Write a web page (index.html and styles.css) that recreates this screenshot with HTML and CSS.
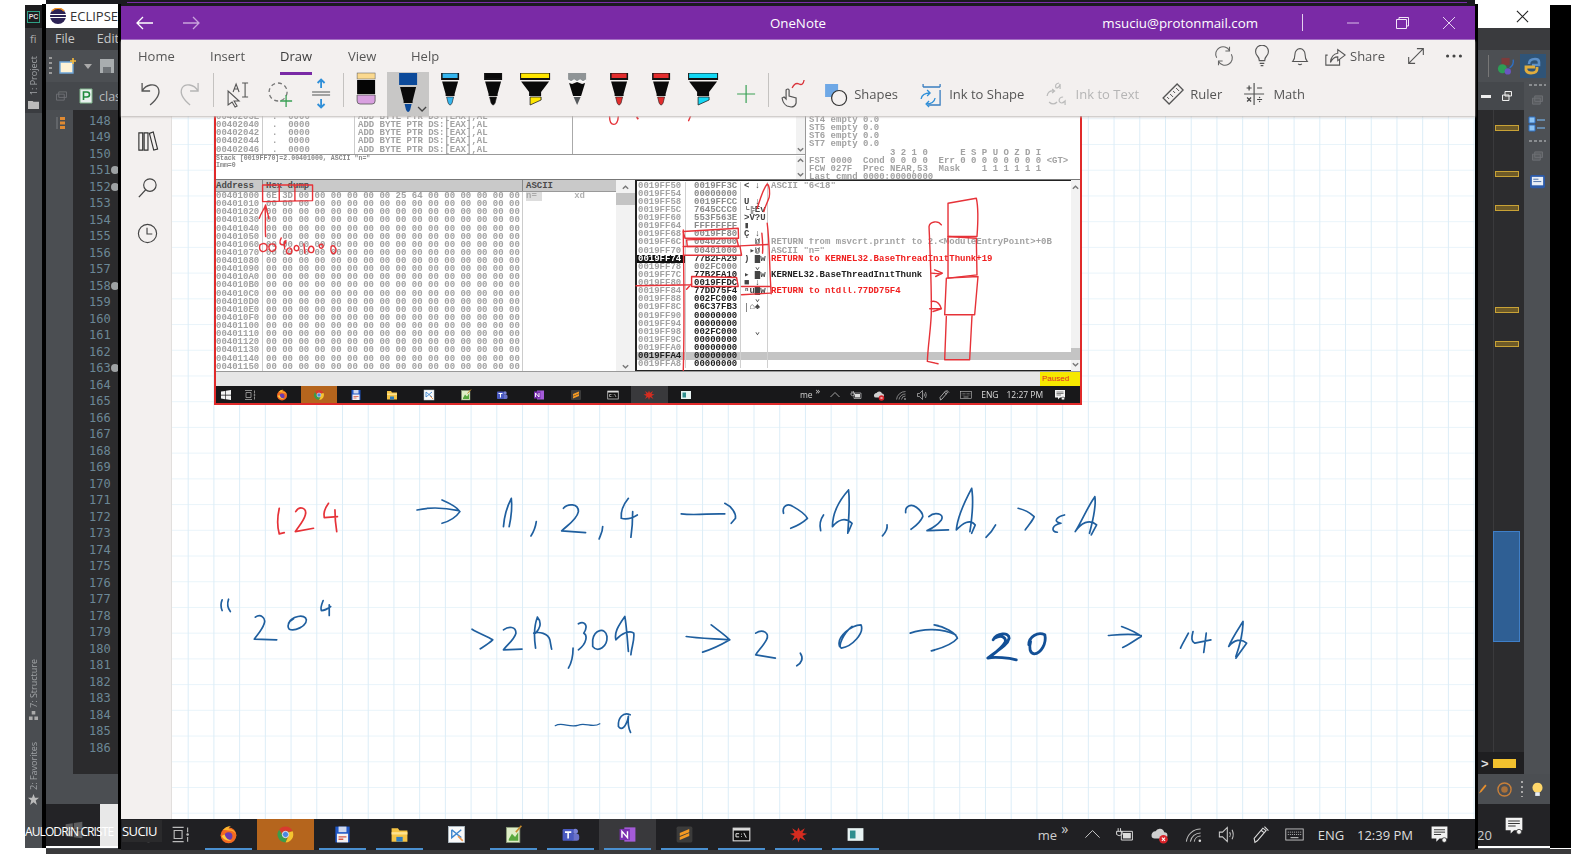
FILE: index.html
```html
<!DOCTYPE html>
<html lang="en">
<head>
  <meta charset="UTF-8" />
  <title>OneNote</title>
  <link rel="stylesheet" href="styles.css">
</head>
<body>
  <svg class="defs" aria-hidden="true">
    <symbol id="pen" viewBox="0 0 42 44">
      <rect x="12" y="1" width="18" height="7" fill="#111"/><rect x="13.5" y="1.5" width="15" height="4.5" fill="currentColor"/>
      <path d="M13 9.5H29L25.5 22V24H16.5V22Z" fill="#0a0a0a"/>
      <path d="M17.5 25H24.5L23 31Q21 35 19 31Z" fill="currentColor" stroke="#222" stroke-width=".6"/>
    </symbol>
    <symbol id="pen-sel" viewBox="0 0 42 44">
      <rect x="12" y="1" width="18" height="12" fill="#0c4a9a"/>
      <path d="M13 15H29L25.5 29V31H16.5V29Z" fill="#0a0a0a"/>
      <path d="M17.5 32H24.5L23 38Q21 42 19 38Z" fill="#0c4a9a"/>
      <path d="M31 35L35 39L39 35" fill="none" stroke="#444" stroke-width="1.3"/>
    </symbol>
    <symbol id="marker" viewBox="0 0 42 44">
      <rect x="6" y="1" width="30" height="7" fill="#111"/><rect x="7" y="1.5" width="28" height="4.5" fill="currentColor"/>
      <path d="M7 9.5H35L27 20V24H15V20Z" fill="#0a0a0a"/>
      <path d="M16 25H27V28L16 33Z" fill="currentColor" stroke="#222" stroke-width=".8"/>
    </symbol>
    <symbol id="pencil" viewBox="0 0 42 44">
      <rect x="12" y="1" width="18" height="8" fill="#8f9496"/>
      <path d="M12 8L15 10L18 8L21 10L24 8L27 10L30 8" fill="none" stroke="#fff" stroke-width="1.2"/>
      <path d="M13 11L16 12L21 10L26 12L29 11L25 24H17Z" fill="#0a0a0a"/>
      <path d="M17.5 25H24.5L21 33Z" fill="#55595c"/>
    </symbol>
    <symbol id="eraser" viewBox="0 0 42 44">
      <rect x="12" y="1" width="18" height="6" fill="#fbd98f" stroke="#555" stroke-width=".5"/>
      <rect x="12" y="8" width="18" height="14" fill="#050505"/>
      <path d="M12 23H30V29Q30 32 27 32H15Q12 32 12 29Z" fill="#d9a0e0" stroke="#555" stroke-width=".8"/>
    </symbol>

    <symbol id="win" viewBox="0 0 24 24"><path d="M2 5L10.5 3.8V11.5H2ZM11.8 3.6L22 2V11.5H11.8ZM2 12.8H10.5V20.4L2 19.2ZM11.8 12.8H22V22L11.8 20.6Z" fill="currentColor"/></symbol>
    <symbol id="taskview" viewBox="0 0 24 24"><path d="M2 3H16M2 21H16M4 7H14V17H4ZM21 3V9M21 15V21" fill="none" stroke="#bbb" stroke-width="1.4"/><circle cx="21" cy="12" r="1.6" fill="#bbb"/></symbol>
    <symbol id="firefox" viewBox="0 0 24 24"><circle cx="12" cy="13" r="10" fill="#f26a21"/><path d="M5 6Q10 0 15 2Q12 3 12 5Q20 5 22 13Q20 7 12 7Z" fill="#ffb52e"/><circle cx="12" cy="14" r="5" fill="#6a3cb0"/><path d="M3 14Q8 22 17 19Q10 20 7 12Z" fill="#ffcb3d"/></symbol>
    <symbol id="chrome" viewBox="0 0 24 24"><path d="M12 2A10 10 0 0 1 21 8H12A4 4 0 0 0 8 10L4 6A10 10 0 0 1 12 2Z" fill="#d93a2e"/><path d="M21 8A10 10 0 0 1 12 22L16 14A4 4 0 0 0 15.5 9.5Z" fill="#f4c430"/><path d="M4 6L8.5 14A4 4 0 0 0 14 16L12 22A10 10 0 0 1 4 6Z" fill="#3b9c4a"/><circle cx="12" cy="12" r="4" fill="#4a87e0" stroke="#fff"/></symbol>
    <symbol id="save" viewBox="0 0 24 24"><path d="M3 2H21V22H3Z" fill="#1f57c7"/><rect x="7" y="2" width="10" height="7" fill="#cfd8ee"/><rect x="5" y="11" width="14" height="11" fill="#f4f0f0"/><path d="M7 15H17M7 18H13" stroke="#d0584c" stroke-width="1.6"/></symbol>
    <symbol id="folder" viewBox="0 0 24 24"><path d="M2 4H10L12 7H22V21H2Z" fill="#f5c445"/><rect x="2" y="9" width="20" height="3" fill="#ffe38f"/><rect x="8" y="15" width="8" height="6" fill="#2f7dc0"/></symbol>
    <symbol id="paint" viewBox="0 0 24 24"><rect x="2" y="2" width="20" height="20" fill="#fafafa" stroke="#b9c6cf"/><path d="M6 6L12 11L6 16V6M18 6L12 11L18 16" fill="none" stroke="#3d86cf" stroke-width="1.8"/><path d="M14 14L20 20" stroke="#ef9a50" stroke-width="2"/></symbol>
    <symbol id="notepad" viewBox="0 0 24 24"><rect x="3" y="3" width="17" height="19" fill="#dfeec7" stroke="#8a9a78"/><path d="M6 18L10 11L14 15L18 9V20H6Z" fill="#58a83e"/><path d="M15 9L22 1" stroke="#c58b2d" stroke-width="2"/></symbol>
    <symbol id="teams" viewBox="0 0 24 24"><circle cx="18" cy="8" r="3.4" fill="#7b83d6"/><rect x="13" y="11" width="10" height="9" rx="3" fill="#6a72c9"/><rect x="2" y="5" width="14" height="15" rx="1.5" fill="#4a5ac0"/><path d="M5 9H13M9 9V17" stroke="#fff" stroke-width="2"/></symbol>
    <symbol id="onenote" viewBox="0 0 24 24"><rect x="8" y="3" width="14" height="18" fill="#a45bd8"/><rect x="2" y="5" width="13" height="14" fill="#7a2fb0"/><path d="M5 16V8L12 16V8" fill="none" stroke="#fff" stroke-width="1.8"/></symbol>
    <symbol id="sublime" viewBox="0 0 24 24"><rect x="2" y="2" width="20" height="20" rx="2" fill="#3b3b3b"/><path d="M6 10L18 5V9L6 14ZM6 15L18 10V14L6 19Z" fill="#f59a23"/></symbol>
    <symbol id="cmd" viewBox="0 0 24 24"><rect x="1.5" y="4" width="21" height="16" fill="#111" stroke="#ddd" stroke-width="1.4"/><rect x="1.5" y="4" width="21" height="3" fill="#ddd"/><path d="M5 11H9M5 11V15H9M12 11V12M12 14V15M15 10L18 16" fill="none" stroke="#eee" stroke-width="1.2"/></symbol>
    <symbol id="bug" viewBox="0 0 24 24"><path d="M12 3L14 8L20 4L17 10L23 11L17 14L21 20L14 16L12 22L10 16L4 20L7 14L1 11L7 10L4 4L10 8Z" fill="#d62c20"/></symbol>
    <symbol id="app" viewBox="0 0 24 24"><rect x="2" y="4" width="20" height="16" fill="#e8f3f3"/><rect x="5" y="7" width="7" height="10" fill="#2f8f8f"/></symbol>
    <symbol id="batt" viewBox="0 0 24 24"><path d="M8 8H22V19H8ZM4 4V8M7 4V8M2 8H9V12Q5 15 2 12Z" fill="none" stroke="#ddd" stroke-width="1.2"/><rect x="10" y="10" width="10" height="7" fill="#ddd"/></symbol>
    <symbol id="cloud" viewBox="0 0 24 24"><path d="M2 14A5 5 0 0 1 7 8A6 6 0 0 1 18 9A4 4 0 0 1 18 17H6Q2 17 2 14Z" fill="#cfcfcf"/><circle cx="17" cy="18" r="5.5" fill="#d8232a"/><path d="M15 16L19 20M19 16L15 20" stroke="#fff" stroke-width="1.3"/></symbol>
    <symbol id="wifi" viewBox="0 0 24 24"><path d="M3 21A18 18 0 0 1 21 5M8 21A13 13 0 0 1 21 10M13 21A8 8 0 0 1 21 14" fill="none" stroke="#bbb" stroke-width="1.3"/><circle cx="20" cy="20" r="1.6" fill="#ddd"/></symbol>
    <symbol id="vol" viewBox="0 0 24 24"><path d="M3 9H7L13 3V21L7 15H3ZM16 9Q18 12 16 15M19 6Q22 12 19 18" fill="none" stroke="#ccc" stroke-width="1.3"/></symbol>
    <symbol id="penico" viewBox="0 0 24 24"><path d="M5 22L4 17L15 4L19 7L8 20ZM13 7L17 10M17 2L22 7" fill="none" stroke="#ddd" stroke-width="1.4"/></symbol>
    <symbol id="kbd" viewBox="0 0 24 24"><rect x="1" y="5" width="22" height="14" fill="none" stroke="#ccc" stroke-width="1.1"/><path d="M3.5 9H20.5M3.5 12H20.5" stroke="#ccc" stroke-dasharray="1.4 1.2"/><path d="M7 16H17" stroke="#ccc" stroke-width="1.3"/></symbol>
    <symbol id="notif" viewBox="0 0 24 24"><path d="M2 2H22V17H12L8 21V17H2Z" fill="#f2f2f2"/><path d="M5 6H19M5 9H19M5 12H14" stroke="#333" stroke-width="1.2"/><circle cx="18" cy="19" r="3" fill="#f2f2f2" stroke="#333"/></symbol>

    <symbol id="chev" viewBox="0 0 10 10"><path d="M2 3.5L5 6.5L8 3.5" fill="none" stroke="currentColor" stroke-width="1.5"/></symbol>
  </svg>

  <div class="pc-strip">
    <div class="pc-title"><span class="pc-logo">PC</span></div>
    <div class="pc-menu">fi</div>
    <div class="pc-side">
      <span class="vert vert-project">1: Project</span>
      <svg class="side-folder" viewBox="0 0 12 10"><path d="M0 1H5L6 2H12V10H0Z" fill="#bbb"/></svg>
      <span class="side-space"></span>
      <span class="vert vert-structure">7: Structure</span>
      <svg class="side-mini" viewBox="0 0 10 10"><path d="M3 0H7V4H3ZM0 6H4V10H0ZM6 6H10V10H6Z" fill="#aaa"/></svg>
      <span class="vert vert-favs">2: Favorites</span>
      <svg class="side-star" viewBox="0 0 12 12"><path d="M6 0L7.6 4.2H12L8.4 7L9.8 12L6 9L2.2 12L3.6 7L0 4.2H4.4Z" fill="#bbb"/></svg>
    </div>
  </div>

  <div class="black-left"></div>
  <div class="black-right"></div>
  <div class="top-band"><span class="top-line"></span></div>
  <div class="bottom-band"></div>

  <!-- eclipse window, only its two edges show past onenote -->
  <div class="ecl ecl-left">
    <div class="ecl-title">
      <svg class="ecl-logo" viewBox="0 0 16 16"><circle cx="8" cy="8" r="8" fill="#2c2255"/><path d="M0 6.5H16M0 9.5H16" stroke="#fff" stroke-width="1.2"/><path d="M2 3A8 8 0 0 1 14 3" fill="none" stroke="#f7941e" stroke-width="1.4"/></svg>
      <span>ECLIPSE</span>
    </div>
    <div class="ecl-menu"><span>File</span><span>Edit</span></div>
    <div class="ecl-tools">
      <span class="grip"></span>
      <svg class="new-file" viewBox="0 0 18 18"><path d="M1 5H14V16H1Z" fill="#fff3d6" stroke="#6ea5d8" stroke-width="1.4"/><path d="M14 1V7M11 4H17" stroke="#f5b93d" stroke-width="1.6"/></svg>
      <svg class="caret" viewBox="0 0 8 5"><path d="M0 0H8L4 5Z" fill="#aaa"/></svg>
      <svg class="save-gray" viewBox="0 0 16 16"><path d="M1 1H15V15H1Z" fill="#a9adaf"/><rect x="4" y="9" width="8" height="6" fill="#6f7377"/></svg>
    </div>
    <div class="ecl-tabs">
      <svg class="stack-ico" viewBox="0 0 12 10"><path d="M3 .5H11.5V6.5H3ZM.5 3H9V9.5H.5Z" fill="none" stroke="#6e7175"/></svg>
      <svg class="p-file" viewBox="0 0 14 16"><path d="M1 1H13V15H1Z" fill="#e8f0ee" stroke="#7fb58a"/><path d="M4.5 12V4H8Q10.5 4 10.5 6.5T8 9H4.5" fill="none" stroke="#1f8a3e" stroke-width="1.6"/></svg>
      <span class="tab-name">clas</span>
    </div>
    <div class="ecl-edit">
      <div class="gutter">
        <svg class="gutter-ico" viewBox="0 0 10 14"><path d="M1 1V13" stroke="#7a7d80"/><path d="M4 1H9V4H4ZM4 5.5H9V8.5H4ZM4 10H9V13H4Z" fill="#e08a32"/></svg>
      </div>
      <pre class="lines">148
149
150
151<i class="fold"></i>
152<i class="fold"></i>
153
154
155
156
157
158<i class="fold"></i>
159
160
161
162
163<i class="fold"></i>
164
165
166
167
168
169
170
171
172
173
174
175
176
177
178
179
180
181
182
183
184
185
186</pre>
    </div>
    <div class="ecl-status"></div>
    <div class="ecl-bar">
      <svg class="bar-win" viewBox="0 0 24 24"><use href="#win"/></svg>
      <span class="bar-white"></span>
    </div>
  </div>

  <div class="ecl ecl-right">
    <div class="ecl-title ecl-title-r">
      <svg class="close-r" viewBox="0 0 14 14"><path d="M1 1L13 13M13 1L1 13" stroke="#222" stroke-width="1.2"/></svg>
    </div>
    <div class="ecl-menu"></div>
    <div class="ecl-tools ecl-tools-r">
      <span class="tool-sep"></span>
      <svg class="run-ico" viewBox="0 0 20 20"><rect x="5" y="1" width="9" height="8" fill="#7c3b3b"/><circle cx="6" cy="13" r="5" fill="#2e9c55"/><circle cx="12" cy="16" r="3.5" fill="#6a55c0"/><path d="M14 12Q19 9 18 3" fill="none" stroke="#2f6fc0" stroke-width="1.6"/></svg>
      <span class="py-btn"><svg viewBox="0 0 20 20"><path d="M6 8Q6 3 12 3Q16 3 16 6V9H9" fill="none" stroke="#5b8fc8" stroke-width="2.6"/><path d="M14 11V13Q14 17 8 17Q4 17 3 14V11H12" fill="none" stroke="#e0ad3e" stroke-width="2.8"/></svg></span>
    </div>
    <div class="ecl-body-r">
      <div class="ecl-column">
        <div class="ecl-tabs ecl-tabs-r">
          <span class="dash"></span>
          <svg class="restore-mini" viewBox="0 0 10 10"><path d="M3 .5H9.5V5H3ZM.5 4H7V9.5H.5Z" fill="#555" stroke="#eee"/></svg>
        </div>
        <div class="map">
          <span class="mark mark-1"></span>
          <span class="mark mark-2"></span>
          <span class="mark mark-3"></span>
          <span class="mark mark-4"></span>
          <span class="mark mark-5"></span>
          <span class="thumb"></span>
          <span class="map-foot"><span class="map-gt">&gt;</span><span class="map-yellow"></span></span>
        </div>
      </div>
      <div class="dock">
        <span class="dots"></span>
        <svg class="dock-ico" viewBox="0 0 12 10"><path d="M3 .5H11.5V6.5H3ZM.5 3H9V9.5H.5Z" fill="#5a5d60" stroke="#6e7175"/></svg>
        <svg class="dock-list" viewBox="0 0 18 18"><path d="M1 2H7V8H1ZM1 10H7V16H1Z" fill="#8ec5f5" stroke="#2f6fc0"/><path d="M9 5H17M9 13H17" stroke="#6d9cc8" stroke-width="1.4"/></svg>
        <span class="dots"></span>
        <svg class="dock-ico" viewBox="0 0 12 10"><path d="M3 .5H11.5V6.5H3ZM.5 3H9V9.5H.5Z" fill="#5a5d60" stroke="#6e7175"/></svg>
        <svg class="dock-mon" viewBox="0 0 16 16"><rect x="0" y="0" width="16" height="14" rx="2" fill="#2c5aa8"/><rect x="2" y="2" width="12" height="9" fill="#e8eef6"/><path d="M3.5 4.5H9M3.5 7H12" stroke="#4a6ea8"/></svg>
      </div>
    </div>
    <div class="ecl-status ecl-status-r">
      <svg class="st-pen" viewBox="0 0 10 12"><path d="M1 11L3 7L8 1L9.5 2.5L4 9Z" fill="#e8902e"/></svg>
      <svg class="st-coin" viewBox="0 0 16 16"><circle cx="8" cy="8" r="7" fill="none" stroke="#c9803a" stroke-width="1.5"/><circle cx="8" cy="8" r="3.5" fill="#a8703a"/></svg>
      <span class="st-dots"></span>
      <svg class="st-bulb" viewBox="0 0 12 16"><circle cx="6" cy="6" r="5.5" fill="#ffd76a"/><rect x="3.5" y="11" width="5" height="4" fill="#e8eef6"/></svg>
    </div>
    <div class="ecl-bar ecl-bar-r">
      <span class="bar-num">20</span>
      <svg class="bar-notif" viewBox="0 0 24 24"><use href="#notif"/></svg>
    </div>
  </div>

  <!-- onenote -->
  <div class="onenote">
    <div class="titlebar">
      <div class="nav">
        <svg viewBox="0 0 20 16"><path d="M18 8H2M8 2L2 8L8 14" fill="none" stroke="#fff" stroke-width="1.3"/></svg>
        <svg class="off" viewBox="0 0 20 16"><path d="M2 8H18M12 2L18 8L12 14" fill="none" stroke="#c9a4dc" stroke-width="1.3"/></svg>
      </div>
      <div class="app-name">OneNote</div>
      <div class="win-side">
        <span class="email">msuciu@protonmail.com</span>
        <span class="pipe"></span>
        <svg class="wbtn" viewBox="0 0 48 12"><path d="M18 6H30" stroke="#d9bde8"/></svg>
        <svg class="wbtn" viewBox="0 0 48 12"><path d="M19.5 2.5H29.5V11.5H19.5ZM22 2.5V.5H31.5V9H29.5" fill="none" stroke="#f2e6f8"/></svg>
        <svg class="wbtn" viewBox="0 0 48 12"><path d="M18 0L30 12M30 0L18 12" stroke="#e6d3f0"/></svg>
      </div>
    </div>

    <div class="ribbon">
      <div class="rib-top">
        <nav class="tabs">
          <span>Home</span><span>Insert</span><span class="active">Draw</span><span>View</span><span>Help</span>
        </nav>
        <div class="rib-actions">
          <svg class="act" viewBox="0 0 24 24"><path d="M4 14A8 8 0 0 1 18 6M20 10A8 8 0 0 1 6 18M18 2V6.5H13.5M6 22V17.5H10.5" fill="none" stroke="#666" stroke-width="1.2"/></svg>
          <svg class="act" viewBox="0 0 24 24"><path d="M9 17Q9 14 7 12A7 7 0 1 1 17 12Q15 14 15 17ZM9.5 20H14.5M10.5 22.5H13.5" fill="none" stroke="#555" stroke-width="1.2"/></svg>
          <svg class="act" viewBox="0 0 24 24"><path d="M4 18H20Q17.5 15 17.5 10A5.5 6 0 0 0 6.5 10Q6.5 15 4 18ZM10 20.5Q12 22.5 14 20.5" fill="none" stroke="#555" stroke-width="1.2"/></svg>
          <div class="share">
            <svg viewBox="0 0 24 24"><path d="M4 11H2V22H17V16M7 19Q8 10 15 9V5L23 11L15 17V13Q10 13 7 19Z" fill="none" stroke="#555" stroke-width="1.2"/></svg>
            <span>Share</span>
          </div>
          <svg class="act" viewBox="0 0 24 24"><path d="M4 20L20 4M13 4H20V11M4 13V20H11" fill="none" stroke="#555" stroke-width="1.2"/></svg>
          <svg class="act" viewBox="0 0 24 24"><circle cx="5" cy="12" r="1.7" fill="#444"/><circle cx="12" cy="12" r="1.7" fill="#444"/><circle cx="19" cy="12" r="1.7" fill="#444"/></svg>
        </div>
      </div>

      <div class="rib-tools">
        <svg class="tool" viewBox="0 0 42 44"><path d="M14 11V19H22M14 19C18 12 27 11 30 16C33 22 28 28 22 33" fill="none" stroke="#555" stroke-width="1.3"/></svg>
        <svg class="tool" viewBox="0 0 42 44"><path d="M28 11V19H20M28 19C24 12 15 11 12 16C9 22 14 28 20 33" fill="none" stroke="#b5b5b5" stroke-width="1.3"/></svg>
        <span class="rule"></span>
        <svg class="tool" viewBox="0 0 42 44"><path d="M13 19L13 33L17 30L20 35L22 34L19 29H24Z" fill="#f4f1f0" stroke="#555" stroke-width="1.1"/><path d="M18 20L21 12L24 20M19.5 17H22.5M27 11H33M30 11V25M27 25H33" fill="none" stroke="#555" stroke-width="1.1"/></svg>
        <svg class="tool" viewBox="0 0 42 44"><circle cx="20" cy="20" r="9" fill="none" stroke="#777" stroke-width="1.3" stroke-dasharray="4 3"/><path d="M28 23V35M22 29H34" stroke="#3aa055" stroke-width="1.3"/></svg>
        <svg class="tool" viewBox="0 0 42 44"><path d="M12 20H30M12 23H30" stroke="#888" stroke-width="1.5"/><path d="M21 16V8M17.5 11L21 7.5L24.5 11M21 27V35M17.5 32L21 35.5L24.5 32" fill="none" stroke="#2f8fd8" stroke-width="1.8"/></svg>
        <span class="rule"></span>
        <svg class="tool" viewBox="0 0 42 44"><use href="#eraser"/></svg>
        <span class="tool-sel"><svg viewBox="0 0 42 44"><use href="#pen-sel"/></svg></span>
        <svg class="tool c-cyan" viewBox="0 0 42 44"><use href="#pen"/></svg>
        <svg class="tool c-black" viewBox="0 0 42 44"><use href="#pen"/></svg>
        <svg class="tool c-yellow" viewBox="0 0 42 44"><use href="#marker"/></svg>
        <svg class="tool" viewBox="0 0 42 44"><use href="#pencil"/></svg>
        <svg class="tool c-red" viewBox="0 0 42 44"><use href="#pen"/></svg>
        <svg class="tool c-red" viewBox="0 0 42 44"><use href="#pen"/></svg>
        <svg class="tool c-aqua" viewBox="0 0 42 44"><use href="#marker"/></svg>
        <svg class="tool" viewBox="0 0 42 44"><path d="M21 13V31M12 22H30" stroke="#3aa055" stroke-width="1.2"/></svg>
        <span class="rule"></span>
        <svg class="tool" viewBox="0 0 42 44"><path d="M17 34Q13 32 12 26L14 25L16 27V18Q18 16 19 18V24L26 26V31Q25 35 21 35Z" fill="#f4f1f0" stroke="#555" stroke-width="1.2"/><path d="M22 16Q25 10 29 12T34 8" fill="none" stroke="#d9333a" stroke-width="1.3"/></svg>
        <div class="rib-btn rib-first">
          <svg class="tool" viewBox="0 0 42 44"><rect x="11" y="12" width="13" height="13" fill="#6ea8e6"/><circle cx="25" cy="26" r="7.5" fill="#f4f1f0" stroke="#333" stroke-width="1.2"/></svg>
          <span>Shapes</span>
        </div>
        <div class="rib-btn">
          <svg class="tool" viewBox="0 0 42 44"><path d="M14 15H31M14 12V15M31 12V15M31 18V33H19" fill="none" stroke="#3a7ec0" stroke-width="1.3"/><path d="M12 27Q13 21 21 21M18 18L21 21L18 24M26 26Q25 32 17 32M20 29L17 32L20 35" fill="none" stroke="#2f8fd8" stroke-width="1.3"/></svg>
          <span>Ink to Shape</span>
        </div>
        <div class="rib-btn rib-off">
          <svg class="tool" viewBox="0 0 42 44"><path d="M24 11Q19 12 21 16Q24 16 25 12V17M12 24Q13 18 19 19M17 17L19.5 19L17 21M28 25Q24 25 24 29Q26 33 30 29V33M14 30Q18 34 22 30" fill="none" stroke="#bbb" stroke-width="1.2"/></svg>
          <span>Ink to Text</span>
        </div>
        <div class="rib-btn">
          <svg class="tool" viewBox="0 0 42 44"><path d="M13 26L27 12L33 18L19 32Z" fill="none" stroke="#555" stroke-width="1.3"/><path d="M17 25L19 27M20 22L23 25M23 19L25 21M26 16L29 19" stroke="#555"/></svg>
          <span>Ruler</span>
        </div>
        <div class="rib-btn">
          <svg class="tool" viewBox="0 0 42 44"><path d="M21 11V33M11 22H31" stroke="#555" stroke-width="1.2"/><path d="M13.5 16H18.5M16 13.5V18.5M24 16H29M14 25.5L18 29.5M18 25.5L14 29.5M24 27.5H29" stroke="#444" stroke-width="1.2"/><circle cx="26.5" cy="25.5" r=".7" fill="#444"/><circle cx="26.5" cy="29.5" r=".7" fill="#444"/></svg>
          <span>Math</span>
        </div>
      </div>
    </div>

    <div class="note">
      <aside class="note-side">
        <svg viewBox="0 0 24 24"><path d="M3 3H7V21H3ZM8.5 3H12.5V21H8.5ZM14 3.5L18 2L22.5 20L18.5 21Z" fill="none" stroke="#333" stroke-width="1.2"/></svg>
        <svg viewBox="0 0 24 24"><circle cx="14.5" cy="9.5" r="6.5" fill="none" stroke="#444" stroke-width="1.2"/><path d="M10 14.5L3 22" stroke="#444" stroke-width="1.4"/></svg>
        <svg viewBox="0 0 24 24"><circle cx="12" cy="12" r="9.5" fill="none" stroke="#444" stroke-width="1.2"/><path d="M11.5 6V12.5H17" fill="none" stroke="#444" stroke-width="1.2"/></svg>
      </aside>

      <div class="canvas">
        <div class="shot">
          <div class="cpu-row">
            <div class="cpu-left">
              <div class="disasm">
                <pre class="col-addr">0040203E
00402040
00402042
00402044
00402046</pre>
                <pre class="col-hex">.  0000
.  0000
.  0000
.  0000
.  0000</pre>
                <pre class="col-code">ADD BYTE PTR DS:[EAX],AL
ADD BYTE PTR DS:[EAX],AL
ADD BYTE PTR DS:[EAX],AL
ADD BYTE PTR DS:[EAX],AL
ADD BYTE PTR DS:[EAX],AL</pre>
                <div class="col-empty"></div>
                <div class="sbar sbar-down"><svg class="sb-chev" viewBox="0 0 10 10"><use href="#chev"/></svg></div>
              </div>
              <div class="infoline">
                <pre>Stack [0019FF70]=2.00401000, ASCII "n="
Imm=0</pre>
                <div class="sbar sbar-both">
                  <svg class="sb-chev up" viewBox="0 0 10 10"><use href="#chev"/></svg>
                  <svg class="sb-chev" viewBox="0 0 10 10"><use href="#chev"/></svg>
                </div>
              </div>
            </div>
            <pre class="regs">ST4 empty 0.0
ST5 empty 0.0
ST6 empty 0.0
ST7 empty 0.0
               3 2 1 0      E S P U O Z D I
FST 0000  Cond 0 0 0 0  Err 0 0 0 0 0 0 0 0 &lt;GT&gt;
FCW 027F  Prec NEAR,53  Mask    1 1 1 1 1 1
Last cmnd 0000:00000000</pre>
          </div>

          <div class="data-row">
            <div class="dump">
              <div class="dump-head"><span class="h-addr">Address</span><span class="h-hex">Hex dump</span><span class="h-ascii">ASCII</span></div>
              <div class="dump-body">
                <pre class="d-addr">00401000
00401010
00401020
00401030
00401040
00401050
00401060
00401070
00401080
00401090
004010A0
004010B0
004010C0
004010D0
004010E0
004010F0
00401100
00401110
00401120
00401130
00401140
00401150</pre>
                <pre class="d-hex">6E 3D 00 00 00 00 00 00 25 64 00 00 00 00 00 00
00 00 00 00 00 00 00 00 00 00 00 00 00 00 00 00
00 00 00 00 00 00 00 00 00 00 00 00 00 00 00 00
00 00 00 00 00 00 00 00 00 00 00 00 00 00 00 00
00 00 00 00 00 00 00 00 00 00 00 00 00 00 00 00
00 00 00 00 00 00 00 00 00 00 00 00 00 00 00 00
00 00 00 00 00 00 00 00 00 00 00 00 00 00 00 00
00 00 00 00 00 00 00 00 00 00 00 00 00 00 00 00
00 00 00 00 00 00 00 00 00 00 00 00 00 00 00 00
00 00 00 00 00 00 00 00 00 00 00 00 00 00 00 00
00 00 00 00 00 00 00 00 00 00 00 00 00 00 00 00
00 00 00 00 00 00 00 00 00 00 00 00 00 00 00 00
00 00 00 00 00 00 00 00 00 00 00 00 00 00 00 00
00 00 00 00 00 00 00 00 00 00 00 00 00 00 00 00
00 00 00 00 00 00 00 00 00 00 00 00 00 00 00 00
00 00 00 00 00 00 00 00 00 00 00 00 00 00 00 00
00 00 00 00 00 00 00 00 00 00 00 00 00 00 00 00
00 00 00 00 00 00 00 00 00 00 00 00 00 00 00 00
00 00 00 00 00 00 00 00 00 00 00 00 00 00 00 00
00 00 00 00 00 00 00 00 00 00 00 00 00 00 00 00
00 00 00 00 00 00 00 00 00 00 00 00 00 00 00 00
00 00 00 00 00 00 00 00 00 00 00 00 00 00 00 00</pre>
                <pre class="d-ascii"><mark>n=</mark>      xd</pre>
              </div>
              <div class="dump-scroll">
                <svg class="sb-chev up" viewBox="0 0 10 10"><use href="#chev"/></svg>
                <span class="sb-thumb"></span>
                <svg class="sb-chev sb-end" viewBox="0 0 10 10"><use href="#chev"/></svg>
              </div>
            </div>

            <div class="stack">
              <div class="stack-rows">
                <div class="srow"><span>0019FF50</span><span>0019FF3C</span><span>&lt; ↓</span><span>ASCII "6&lt;18"</span></div>
                <div class="srow"><span>0019FF54</span><span>00000000</span><span></span><span></span></div>
                <div class="srow"><span>0019FF58</span><span>0019FFCC</span><span>Ü ↓</span><span></span></div>
                <div class="srow"><span>0019FF5C</span><span>7645CCC0</span><span>└╠Ev</span><span></span></div>
                <div class="srow"><span>0019FF60</span><span>553F563E</span><span>&gt;V?U</span><span></span></div>
                <div class="srow"><span>0019FF64</span><span>FFFFFFFF</span><span>▮</span><span></span></div>
                <div class="srow"><span>0019FF68</span><span>0019FF80</span><span>Ç ↓</span><span></span></div>
                <div class="srow"><span>0019FF6C</span><span>00402000</span><span>  @</span><span>RETURN from msvcrt.printf to 2.&lt;ModuleEntryPoint&gt;+0B</span></div>
                <div class="srow"><span>0019FF70</span><span>00401000</span><span> ▸@</span><span>ASCII "n="</span></div>
                <div class="srow sel"><span>0019FF74</span><span>77B2FA29</span><span>) █w</span><span class="ret">RETURN to KERNEL32.BaseThreadInitThunk+19</span></div>
                <div class="srow"><span>0019FF78</span><span>002FC000</span><span>  ⌄</span><span></span></div>
                <div class="srow dk-val"><span>0019FF7C</span><span>77B2FA10</span><span>▸ █w</span><span class="dark-c">KERNEL32.BaseThreadInitThunk</span></div>
                <div class="srow dk-val"><span>0019FF80</span><span>0019FFDC</span><span>■ ↓</span><span></span></div>
                <div class="srow dk-val"><span>0019FF84</span><span>77DD75F4</span><span>ⁿu█w</span><span class="ret">RETURN to ntdll.77DD75F4</span></div>
                <div class="srow dk-val"><span>0019FF88</span><span>002FC000</span><span>  ⌄</span><span></span></div>
                <div class="srow dk-val"><span>0019FF8C</span><span>06C37FB3</span><span>│⌂♠</span><span></span></div>
                <div class="srow dk-val"><span>0019FF90</span><span>00000000</span><span></span><span></span></div>
                <div class="srow dk-val"><span>0019FF94</span><span>00000000</span><span></span><span></span></div>
                <div class="srow dk-val"><span>0019FF98</span><span>002FC000</span><span>  ⌄</span><span></span></div>
                <div class="srow dk-val"><span>0019FF9C</span><span>00000000</span><span></span><span></span></div>
                <div class="srow dk-val"><span>0019FFA0</span><span>00000000</span><span></span><span></span></div>
                <div class="srow dk-val hl"><span>0019FFA4</span><span>00000000</span><span></span><span></span></div>
                <div class="srow dk-val"><span>0019FFA8</span><span>00000000</span><span></span><span></span></div>
              </div>
              <div class="stack-scroll">
                <svg class="sb-chev up" viewBox="0 0 10 10"><use href="#chev"/></svg>
                <span class="sb-spacer"></span>
                <span class="sb-thumb"></span>
                <svg class="sb-chev" viewBox="0 0 10 10"><use href="#chev"/></svg>
              </div>
            </div>
          </div>

          <div class="shot-status"><span class="paused">Paused</span></div>

          <div class="tbar mini">
            <span class="t-start"><svg viewBox="0 0 24 24"><use href="#win"/></svg></span>
            <span class="t-view"><svg viewBox="0 0 24 24"><use href="#taskview"/></svg></span>
            <span class="t-app"><svg viewBox="0 0 24 24"><use href="#firefox"/></svg></span>
            <span class="t-app t-hot"><svg viewBox="0 0 24 24"><use href="#chrome"/></svg></span>
            <span class="t-app"><svg viewBox="0 0 24 24"><use href="#save"/></svg></span>
            <span class="t-app"><svg viewBox="0 0 24 24"><use href="#folder"/></svg></span>
            <span class="t-app"><svg viewBox="0 0 24 24"><use href="#paint"/></svg></span>
            <span class="t-app"><svg viewBox="0 0 24 24"><use href="#notepad"/></svg></span>
            <span class="t-app"><svg viewBox="0 0 24 24"><use href="#teams"/></svg></span>
            <span class="t-app"><svg viewBox="0 0 24 24"><use href="#onenote"/></svg></span>
            <span class="t-app"><svg viewBox="0 0 24 24"><use href="#sublime"/></svg></span>
            <span class="t-app"><svg viewBox="0 0 24 24"><use href="#cmd"/></svg></span>
            <span class="t-app t-soft"><svg viewBox="0 0 24 24"><use href="#bug"/></svg></span>
            <span class="t-app"><svg viewBox="0 0 24 24"><use href="#app"/></svg></span>
            <span class="t-fill"></span>
            <span class="t-me">me<sup>»</sup></span>
            <span class="t-up"><svg viewBox="0 0 24 24"><path d="M3 16L12 7L21 16" fill="none" stroke="#ccc" stroke-width="1.5"/></svg></span>
            <span class="t-tray"><svg viewBox="0 0 24 24"><use href="#batt"/></svg></span>
            <span class="t-tray t-wide"><svg viewBox="0 0 24 24"><use href="#cloud"/></svg></span>
            <span class="t-tray"><svg viewBox="0 0 24 24"><use href="#wifi"/></svg></span>
            <span class="t-tray"><svg viewBox="0 0 24 24"><use href="#vol"/></svg></span>
            <span class="t-tray"><svg viewBox="0 0 24 24"><use href="#penico"/></svg></span>
            <span class="t-tray t-wide"><svg viewBox="0 0 24 24"><use href="#kbd"/></svg></span>
            <span class="t-lang">ENG</span>
            <span class="t-time">12:27 PM</span>
            <span class="t-notif"><svg viewBox="0 0 24 24"><use href="#notif"/></svg></span>
          </div>
        </div>

        <!-- pen strokes, coordinates are taken from the page at a 3x scale -->
        <svg class="ink" viewBox="172 116 1303 703">
          <g class="red" transform="translate(200 110) scale(.333)">
            <path d="M188 225L338 225L338 272L188 275ZM238 228L238 272M285 228L285 272"/>
            <path d="M195 290C198 320 195 350 197 380M178 325C185 305 195 295 197 285C200 300 205 315 207 327"/>
            <path d="M180 405C195 395 205 405 200 420C190 430 175 425 180 405ZM208 405C222 397 232 408 226 420C216 430 204 422 208 405Z"/>
            <path d="M244 384C238 395 238 405 250 405C258 402 258 398 258 392M254 394L254 416"/>
            <path d="M262 418C270 408 280 418 274 430C264 436 256 428 262 418ZM284 410C290 402 300 410 296 420C288 426 280 420 284 410ZM312 402L315 430"/>
            <path d="M328 412C336 404 346 414 340 426C330 432 322 424 328 412ZM364 415a6 6 0 1 1 .1 0ZM394 410C400 402 410 412 408 425C402 438 390 430 394 410Z"/>
            <path d="M1230 20C1230 50 1255 52 1256 20"/>
            <path d="M1312 22L1314 26"/>
          </g>
          <g class="red" transform="translate(630 110) scale(.333)">
            <path d="M22 22L24 26M182 18L176 32"/>
            <path d="M382 295C390 270 400 235 412 222C420 228 420 250 418 262C412 280 405 290 402 305"/>
            <path d="M412 340C420 400 418 470 424 552M396 370C398 390 400 410 398 430"/>
            <path d="M160 365L325 355L326 385L165 385ZM170 390L320 385L326 410L172 410Z"/>
            <path d="M160 410L330 408L414 404M330 408L335 436L160 436"/>
            <path d="M185 500L320 503L325 530L185 530Z"/>
            <path d="M160 360C160 420 165 600 160 782"/>
            <path d="M18 528L185 525M170 538L185 522"/>
            <path d="M335 530L422 530M335 555L422 550"/>
            <path d="M955 280L1040 265C1048 300 1045 340 1042 380L955 380Z"/>
            <path d="M955 380L1040 385L1042 495L955 505Z"/>
            <path d="M950 505L1045 500L1035 615L945 615Z"/>
            <path d="M950 620L945 750L1020 750L1027 618"/>
            <path d="M935 345C925 330 900 335 898 350C900 400 905 500 905 600C905 650 895 700 893 755L925 762"/>
            <path d="M905 490L935 492M915 480L938 490L918 500"/>
            <path d="M900 597L932 597M905 575C920 572 930 580 935 597L910 605"/>
          </g>
          <g class="red big" transform="translate(200 470) scale(.357 .333)">
            <path d="M222 115C217 140 216 170 222 192L236 188"/>
            <path d="M268 125C280 105 300 115 295 135C290 155 275 170 267 185L318 175"/>
            <path d="M360 100C350 115 345 130 348 143L385 140M378 120C378 140 380 165 383 185"/>
          </g>
          <g class="blue" transform="translate(200 470) scale(.357 .333)">
            <path d="M608 120C640 112 680 112 725 122M678 90C700 100 720 110 728 125C715 145 695 155 678 160"/>
            <path d="M850 170C852 140 860 110 872 85C876 120 870 150 866 170"/>
            <path d="M942 155C940 170 935 185 927 198"/>
            <path d="M1018 115C1030 100 1060 100 1060 125C1055 150 1030 165 1013 183L1080 188"/>
            <path d="M1128 170C1128 185 1122 195 1118 207"/>
            <path d="M1200 85C1185 105 1178 125 1180 145C1195 150 1210 145 1225 135M1212 125C1212 150 1210 180 1207 202"/>
            <path d="M1348 132C1390 137 1430 130 1470 132M1470 100C1490 110 1502 130 1500 145L1488 160"/>
            <path d="M62 390C58 400 58 412 62 422M80 388C76 400 76 412 85 425"/>
            <path d="M155 442C170 430 185 445 180 460C175 480 160 495 152 508L215 510"/>
            <path d="M248 460C255 440 295 430 298 450C298 470 265 485 250 478C243 470 248 455 262 447"/>
            <path d="M345 392C340 405 337 415 340 422C350 422 360 415 366 410M362 405L362 437"/>
            <path d="M762 478C780 490 805 500 820 510C810 520 795 530 785 537"/>
            <path d="M850 480C865 468 885 470 885 490C880 510 860 525 850 540L902 538"/>
            <path d="M945 442C935 470 935 500 940 535M935 490C950 485 975 490 980 510C982 520 983 530 985 538M945 442C960 460 950 480 940 490"/>
            <path d="M1045 535C1045 560 1040 580 1032 595"/>
            <path d="M1060 462C1075 452 1090 465 1075 490C1085 495 1085 520 1060 540"/>
            <path d="M1100 510C1105 480 1135 470 1140 500C1142 530 1115 550 1100 530Z"/>
            <path d="M1190 440C1170 470 1160 490 1165 510C1180 490 1205 480 1215 490C1218 510 1208 535 1207 555M1190 440C1195 470 1197 510 1200 545"/>
            <path d="M1362 500C1390 505 1450 507 1482 510M1432 465C1450 480 1470 495 1484 510C1460 525 1430 540 1408 547"/>
            <path class="thin" d="M995 768C1015 755 1035 776 1060 766C1080 757 1100 776 1120 762"/>
            <path d="M1205 735C1185 725 1170 745 1172 770C1180 785 1195 770 1200 740C1198 760 1200 775 1206 788"/>
          </g>
          <g class="blue" transform="translate(720 470) scale(.357 .333)">
            <path d="M178 130C173 108 190 98 205 110C225 122 240 135 245 145C230 160 210 170 198 175"/>
            <path d="M290 135C280 150 278 165 282 182"/>
            <path d="M360 60C335 90 315 130 315 170C330 150 350 140 370 160L360 185M360 60C365 100 360 150 358 190"/>
            <path d="M468 165C470 180 462 190 455 198"/>
            <path d="M520 128C518 108 535 100 550 112C560 120 568 130 568 140C560 160 545 170 535 178"/>
            <path d="M585 140C600 125 630 130 620 150C610 165 595 175 580 182L640 180"/>
            <path d="M705 55C685 95 665 140 662 180C680 160 700 145 715 165L705 190M705 55C712 100 705 150 700 185"/>
            <path d="M772 165C765 180 755 192 745 202"/>
            <path d="M835 115C855 120 870 130 880 140C875 155 860 170 855 180"/>
            <path d="M965 135C945 140 930 155 955 160C930 165 925 185 945 187"/>
            <path d="M1050 80C1030 110 1015 150 995 185C1010 160 1035 145 1055 165L1040 195M1050 80C1055 110 1040 170 1035 190"/>
            <path d="M100 490C120 475 140 490 130 510C120 530 105 545 100 555L155 565"/>
            <path d="M225 550C235 565 228 580 215 588"/>
            <path d="M335 530C325 500 370 465 395 465C405 490 370 530 340 535C330 530 345 490 370 470"/>
            <path d="M533 490C570 475 620 475 660 495M600 465C630 470 660 490 665 505C650 525 620 535 592 543"/>
            <path class="thick" d="M765 510C775 490 810 485 810 505C805 530 770 545 750 565C770 560 810 565 830 570M770 505C785 495 800 500 800 515C790 535 770 550 755 562"/>
            <path class="thick" d="M865 525C865 500 890 485 910 495C915 520 900 550 880 552C868 550 865 535 870 515"/>
            <path d="M1088 497C1110 495 1150 490 1180 497M1125 470C1150 480 1170 490 1180 500C1160 512 1145 525 1128 533"/>
            <path d="M1312 490C1305 505 1295 522 1290 535"/>
            <path d="M1325 485C1320 505 1320 515 1330 520L1375 510M1362 490C1360 510 1357 530 1355 548"/>
            <path d="M1465 455C1450 480 1430 515 1425 530C1440 510 1460 505 1475 520L1445 565M1465 455C1465 490 1455 530 1445 560"/>
          </g>
        </svg>
      </div>
    </div>

    <div class="tbar">
      <span class="t-start t-dim"><svg viewBox="0 0 24 24"><use href="#win"/></svg></span>
      <span class="t-view"><svg viewBox="0 0 24 24"><use href="#taskview"/></svg></span>
      <span class="t-app t-on"><svg viewBox="0 0 24 24"><use href="#firefox"/></svg></span>
      <span class="t-app t-hot"><svg viewBox="0 0 24 24"><use href="#chrome"/></svg></span>
      <span class="t-app t-on"><svg viewBox="0 0 24 24"><use href="#save"/></svg></span>
      <span class="t-app t-on"><svg viewBox="0 0 24 24"><use href="#folder"/></svg></span>
      <span class="t-app"><svg viewBox="0 0 24 24"><use href="#paint"/></svg></span>
      <span class="t-app t-on"><svg viewBox="0 0 24 24"><use href="#notepad"/></svg></span>
      <span class="t-app t-on"><svg viewBox="0 0 24 24"><use href="#teams"/></svg></span>
      <span class="t-app t-soft t-on"><svg viewBox="0 0 24 24"><use href="#onenote"/></svg></span>
      <span class="t-app t-on"><svg viewBox="0 0 24 24"><use href="#sublime"/></svg></span>
      <span class="t-app t-on"><svg viewBox="0 0 24 24"><use href="#cmd"/></svg></span>
      <span class="t-app t-on"><svg viewBox="0 0 24 24"><use href="#bug"/></svg></span>
      <span class="t-app t-on"><svg viewBox="0 0 24 24"><use href="#app"/></svg></span>
      <span class="t-fill"></span>
      <span class="t-me">me<sup>»</sup></span>
      <span class="t-up"><svg viewBox="0 0 24 24"><path d="M3 16L12 7L21 16" fill="none" stroke="#ccc" stroke-width="1.2"/></svg></span>
      <span class="t-tray"><svg viewBox="0 0 24 24"><use href="#batt"/></svg></span>
      <span class="t-tray t-wide"><svg viewBox="0 0 24 24"><use href="#cloud"/></svg></span>
      <span class="t-tray"><svg viewBox="0 0 24 24"><use href="#wifi"/></svg></span>
      <span class="t-tray"><svg viewBox="0 0 24 24"><use href="#vol"/></svg></span>
      <span class="t-tray"><svg viewBox="0 0 24 24"><use href="#penico"/></svg></span>
      <span class="t-tray t-wide"><svg viewBox="0 0 24 24"><use href="#kbd"/></svg></span>
      <span class="t-lang">ENG</span>
      <span class="t-time">12:39 PM</span>
      <span class="t-notif"><svg viewBox="0 0 24 24"><use href="#notif"/></svg></span>
    </div>
  </div>

  <div class="name-tag"><span class="name-a">AULODRIN CRISTE</span><span class="name-b">SUCIU</span></div>
</body>
</html>
```
FILE: styles.css
```css
html, body {
  margin: 0;
  height: 100%;
}
body {
  position: relative;
  width: 1596px;
  height: 854px;
  overflow: hidden;
  background: #fff;
  font-family: "Open Sans", "Noto Sans", sans-serif;
  color: #444;
}
pre {
  margin: 0;
  font: inherit;
}
svg {
  display: block;
  flex: none;
}
.defs {
  position: absolute;
  width: 0;
  height: 0;
}

/* backdrop */
.pc-strip {
  position: absolute;
  left: 25px;
  top: 5px;
  width: 17px;
  height: 843px;
  display: flex;
  flex-direction: column;
  background: #45484c;
}
.pc-title {
  height: 23px;
  background: #1d1d1f;
  display: flex;
  align-items: center;
  justify-content: center;
}
.pc-logo {
  border: 1px solid #2f9f84;
  font: bold 7px "Liberation Sans", sans-serif;
  color: #ddd;
  padding: 1px;
  line-height: 8px;
}
.pc-menu {
  height: 22px;
  background: #3a3b3e;
  color: #aaa;
  font-size: 11px;
  line-height: 22px;
  padding-left: 5px;
}
.pc-side {
  flex: 1;
  display: flex;
  flex-direction: column;
  align-items: center;
  background: linear-gradient(#3a3c40 0, #3a3c40 63px, #4a4d51 63px);
}
.vert {
  writing-mode: vertical-rl;
  transform: rotate(180deg);
  font-size: 9px;
  color: #a0a3a6;
  white-space: nowrap;
}
.vert-project { margin-top: 6px; }
.side-folder { width: 11px; margin-top: 5px; }
.side-space { flex: 1; }
.side-mini { width: 9px; margin-top: 3px; }
.vert-favs { margin-top: 22px; }
.side-star { width: 11px; margin: 4px 0 43px; }

.black-left {
  position: absolute;
  left: 42px;
  top: 4px;
  width: 4px;
  height: 844px;
  background: #000;
}
.black-right {
  position: absolute;
  left: 1550px;
  top: 5px;
  width: 21px;
  height: 843px;
  background: #000;
}
.top-band {
  position: absolute;
  left: 46px;
  top: 0;
  width: 1429px;
  height: 6px;
  background: #1b1b20;
}
.top-line {
  position: absolute;
  left: 81px;
  right: 8px;
  top: 2px;
  height: 1px;
  background: #7a2ca8;
}
.bottom-band {
  position: absolute;
  left: 46px;
  top: 849px;
  width: 1525px;
  height: 5px;
  background: #3a3a3c;
}

/* eclipse edges */
.ecl {
  position: absolute;
  top: 4px;
  height: 845px;
  display: flex;
  flex-direction: column;
  background: #4b4e52;
  overflow: hidden;
}
.ecl-left { left: 46px; width: 75px; border-right: 3px solid #000; box-sizing: border-box; }
.ecl-right { left: 1475px; width: 75px; border-left: 3px solid #000; box-sizing: border-box; }
.ecl-title {
  height: 24px;
  flex: none;
  background: #fff;
  display: flex;
  align-items: center;
  gap: 4px;
  padding-left: 4px;
  color: #333;
  font-size: 13px;
  white-space: nowrap;
}
.ecl-logo { width: 16px; height: 16px; }
.ecl-title-r { padding-left: 38px; }
.close-r { width: 13px; height: 13px; }
.ecl-menu {
  height: 22px;
  flex: none;
  background: #3a3b3e;
  color: #c8c8c8;
  font-size: 12.5px;
  line-height: 21px;
  display: flex;
  gap: 22px;
  padding-left: 9px;
  white-space: nowrap;
}
.ecl-tools {
  height: 32px;
  flex: none;
  background: #4c4f53;
  display: flex;
  align-items: center;
  padding-left: 3px;
}
.grip {
  width: 3px;
  height: 18px;
  background: repeating-linear-gradient(#999 0 2px, transparent 2px 5px);
}
.new-file { width: 18px; height: 18px; margin-left: 7px; }
.caret { width: 8px; height: 5px; margin-left: 7px; }
.save-gray { width: 16px; height: 16px; margin-left: 7px; }
.ecl-tabs {
  height: 28px;
  flex: none;
  background: #45484c;
  display: flex;
  align-items: center;
  white-space: nowrap;
}
.stack-ico { width: 11px; height: 10px; margin-left: 10px; }
.p-file { width: 14px; height: 16px; margin-left: 12px; }
.tab-name { color: #b8bbbd; font-size: 12.5px; margin-left: 6px; }
.ecl-edit {
  height: 664px;
  flex: none;
  display: flex;
  background: #4b4e52;
}
.gutter { width: 27px; }
.gutter-ico { width: 10px; height: 14px; margin: 6px 0 0 10px; }
.lines {
  flex: 1;
  background: #2b2b2d;
  padding: 2.5px 0 0 16px;
  font: 12px/16.5px "DejaVu Sans Mono", monospace;
  color: #6b8796;
  overflow: hidden;
}
.fold {
  display: inline-block;
  width: 8px;
  height: 8px;
  border-radius: 50%;
  background: #9ea2a4;
}
.ecl-status { height: 30px; flex: none; background: #4b4e52; }
.ecl-bar {
  height: 42px;
  flex: none;
  background: #232326;
  border-bottom: 2px solid #fff;
  display: flex;
}
.bar-win { width: 20px; height: 20px; margin: 16px 0 0 18px; color: #5d5d5f; }
.bar-white { width: 18px; margin-left: auto; background: #e8e8e8; }
.ecl-bar-r { justify-content: space-between; }
.bar-num { color: #ccc; font-size: 13px; margin-top: 22px; margin-left: -1px; }
.bar-notif { width: 20px; height: 20px; margin: 12px 26px 0 0; }

/* eclipse right side */
.ecl-tools-r { padding-left: 10px; gap: 5px; }
.tool-sep { width: 1px; height: 22px; background: #777; }
.run-ico { width: 18px; height: 18px; margin-left: 3px; }
.py-btn {
  width: 26px;
  height: 24px;
  background: #2f5478;
  display: flex;
  align-items: center;
  justify-content: center;
}
.py-btn svg { width: 20px; height: 20px; }
.ecl-body-r {
  height: 692px;
  flex: none;
  display: flex;
}
.ecl-column { width: 46px; display: flex; flex-direction: column; }
.ecl-tabs-r { height: 28px; background: #45484c; padding-left: 3px; }
.dash { width: 10px; height: 3px; background: #eee; }
.restore-mini { width: 10px; height: 10px; margin-left: 11px; }
.map {
  position: relative;
  flex: 1;
  background: #2c2c2e;
  border-left: 15px solid #2b2b2d;
  box-shadow: inset 1px 0 #3a3a3c;
}
.mark {
  position: absolute;
  left: 2px;
  width: 24px;
  height: 6px;
  box-sizing: border-box;
  background: #6d5a28;
  border: 1px solid #c8a236;
}
.mark-1 { top: 15px; }
.mark-2 { top: 61px; }
.mark-3 { top: 95px; }
.mark-4 { top: 197px; }
.mark-5 { top: 231px; }
.thumb {
  position: absolute;
  left: 0;
  top: 421px;
  width: 27px;
  height: 111px;
  box-sizing: border-box;
  background: #2f5f94;
  border: 1px solid #3f7fc8;
}
.map-foot {
  position: absolute;
  left: -15px;
  right: 0;
  bottom: 0;
  height: 22px;
  background: #1f1f21;
  display: flex;
  align-items: center;
}
.map-gt { color: #ddd; font: bold 13px "Liberation Sans", sans-serif; margin-left: 3px; }
.map-yellow { width: 23px; height: 9px; background: #f2c12e; margin-left: 4px; }
.dock {
  flex: 1;
  background: #4d5054;
  display: flex;
  flex-direction: column;
  align-items: center;
}
.dots {
  width: 17px;
  height: 2px;
  margin-top: 2px;
  background: repeating-linear-gradient(90deg, #8a8d90 0 3px, transparent 3px 5px);
}
.dock-ico { width: 11px; height: 10px; margin-top: 9px; }
.dock-list { width: 18px; height: 18px; margin: 10px 0 5px; }
.dock-mon { width: 15px; height: 15px; margin-top: 14px; }
.ecl-status-r {
  display: flex;
  align-items: center;
}
.st-pen { width: 9px; height: 12px; }
.st-coin { width: 15px; height: 15px; margin-left: 9.5px; }
.st-dots {
  width: 2px;
  height: 16px;
  margin-left: 9px;
  background: repeating-linear-gradient(#aaa 0 2px, transparent 2px 5px);
}
.st-bulb { width: 11px; height: 15px; margin-left: 9.5px; }

/* onenote window */
.onenote {
  position: absolute;
  left: 121px;
  top: 6px;
  width: 1354px;
  height: 844px;
  display: flex;
  flex-direction: column;
}
.titlebar {
  height: 34px;
  flex: none;
  background: #7a2aa6;
  border-bottom: 1px solid #a26bc4;
  box-sizing: border-box;
  display: grid;
  grid-template-columns: 1fr auto 1fr;
  align-items: center;
  color: #fff;
  font-size: 13.3px;
}
.nav {
  display: flex;
  gap: 26px;
  padding-left: 14px;
}
.nav svg { width: 20px; height: 16px; }
.win-side {
  display: flex;
  align-items: center;
  justify-content: flex-end;
  padding-right: 2px;
}
.email { margin-right: 44px; }
.pipe { width: 1px; height: 17px; background: #e4d1ee; margin-right: 26px; }
.wbtn { width: 48px; height: 12px; }

.ribbon {
  height: 76px;
  flex: none;
  background: #f3f0ef;
  box-shadow: 0 1px 2px #bdb9b6;
  position: relative;
  z-index: 2;
}
.rib-top {
  height: 32px;
  display: flex;
  justify-content: space-between;
  align-items: center;
}
.tabs {
  display: flex;
  padding-left: 17px;
  font-size: 13px;
  color: #555;
}
.tabs span { position: relative; width: 70px; }
.tabs span:first-child { width: 72px; }
.tabs span:nth-child(3) { width: 68px; }
.tabs span:nth-child(4) { width: 63px; }
.tabs .active { color: #3c3c3c; }
.tabs .active::after {
  content: "";
  position: absolute;
  left: 0;
  width: 32px;
  top: 25px;
  height: 3px;
  background: #7a2aa6;
}
.rib-actions {
  display: flex;
  align-items: center;
  padding-right: 2px;
}
.act { width: 38px; height: 22px; }
.share {
  width: 78px;
  display: flex;
  align-items: center;
  gap: 4px;
  padding-left: 5px;
  box-sizing: border-box;
  font-size: 13px;
  color: #555;
}
.share svg { width: 22px; height: 22px; }
.rib-tools {
  height: 44px;
  display: flex;
  align-items: stretch;
  padding-left: 7px;
}
.tool { width: 42.2px; height: 44px; }
.tool-sel { width: 42.2px; height: 44px; background: #c8c7c6; flex: none; }
.tool-sel svg { width: 42.2px; height: 44px; }
.rule {
  width: 1px;
  height: 34px;
  margin: 1px 1px 0 1px;
  background: #c4c2c0;
  flex: none;
}
.c-cyan { color: #35b5ee; }
.c-black { color: #0a0a0a; }
.c-yellow { color: #ffe600; }
.c-red { color: #e22d2d; }
.c-aqua { color: #13d8f5; }
.rib-btn {
  display: flex;
  align-items: center;
  font-size: 13px;
  color: #555;
  padding-right: 11px;
  white-space: nowrap;
}
.rib-first { margin-left: 2px; }
.rib-btn span { margin-left: -2px; }
.rib-off { color: #b5b5b5; }

.note {
  flex: 1;
  display: flex;
  min-height: 0;
}
.note-side {
  width: 51px;
  flex: none;
  background: #f3f0ef;
  border-right: 1px solid #e2dfdd;
  box-sizing: border-box;
  display: flex;
  flex-direction: column;
  align-items: center;
  gap: 23px;
  padding: 14px 0 0 3px;
}
.note-side svg { width: 23px; height: 23px; }
.canvas {
  position: relative;
  flex: 1;
  overflow: hidden;
  background-color: #fff;
  background-image:
    linear-gradient(90deg, #dcedf7 1px, transparent 1px),
    linear-gradient(#e9f4fa 1px, transparent 1px);
  background-size: 25.72px 25.73px;
  background-position: 15.7px 2.3px;
}
.ink {
  position: absolute;
  left: 0;
  top: 0;
  width: 1303px;
  height: 703px;
}
.ink path {
  fill: none;
  stroke-linecap: round;
  stroke-linejoin: round;
  vector-effect: non-scaling-stroke;
  stroke-width: 1.4px;
}
.ink .red path { stroke: #e63238; }
.ink .big path { stroke-width: 1.7px; }
.ink .blue path { stroke: #1f5f9f; stroke-width: 1.7px; }
.ink .blue .thin { stroke-width: 1.2px; }
.ink .blue .thick { stroke: #124f96; stroke-width: 2.8px; }

/* the pasted debugger screenshot */
.shot {
  position: absolute;
  left: 42px;
  top: 0;
  width: 868px;
  height: 289px;
  box-sizing: border-box;
  background: #fff;
  border: solid #e02a2a;
  border-width: 0 2px 2px;
  display: flex;
  flex-direction: column;
  font: bold 9px/8.13px "Liberation Mono", monospace;
  color: #a2a2a2;
  overflow: hidden;
}
.cpu-row,
.data-row,
.tbar.mini { filter: blur(.35px); }
.shot pre,
.shot .srow span { white-space: pre; }
.cpu-row {
  height: 64px;
  flex: none;
  display: flex;
  border-bottom: 1px solid #777;
  box-sizing: border-box;
}
.cpu-left {
  width: 590px;
  flex: none;
  display: flex;
  flex-direction: column;
  border-right: 1px solid #999;
  box-sizing: border-box;
}
.disasm {
  height: 38px;
  flex: none;
  display: flex;
  border-bottom: 1px solid #999;
  overflow: hidden;
}
.disasm pre { margin-top: -3px; }
.col-addr { width: 47px; box-sizing: border-box; border-right: 1px solid #ccc; }
.col-hex { width: 92px; box-sizing: border-box; padding-left: 9px; border-right: 1px solid #ccc; }
.col-code { width: 218px; box-sizing: border-box; padding-left: 3px; border-right: 1px solid #aaa; }
.col-empty { flex: 1; }
.sbar {
  width: 9px;
  background: #f2f2f2;
  display: flex;
  flex-direction: column;
  color: #777;
}
.sbar-down { justify-content: flex-end; }
.sbar-both { justify-content: space-between; }
.sb-chev { width: 9px; height: 9px; color: #777; flex: none; }
.sb-chev.up { transform: rotate(180deg); }
.infoline {
  flex: 1;
  display: flex;
  justify-content: space-between;
  font: bold 6.6px/6.6px "Liberation Mono", monospace;
  color: #888;
  padding-top: 1px;
}
.regs {
  flex: 1;
  padding: 0 0 0 3px;
  overflow: hidden;
}

.data-row {
  height: 191px;
  flex: none;
  display: flex;
}
.dump {
  width: 419px;
  flex: none;
  position: relative;
  display: grid;
  grid-template-columns: 400px 19px;
  grid-template-rows: 12px 1fr;
}
.dump-head {
  display: flex;
  background: #c9c9c9;
  border-bottom: 1px solid #999;
  color: #4a4a4a;
  line-height: 13px;
}
.h-addr { width: 47px; box-sizing: border-box; border-right: 1px solid #888; }
.h-hex { width: 260px; box-sizing: border-box; padding-left: 3px; border-right: 1px solid #888; }
.h-ascii { padding-left: 3px; }
.dump-body {
  grid-row: 2;
  display: flex;
  overflow: hidden;
}
.d-addr { width: 47px; box-sizing: border-box; border-right: 1px solid #ccc; }
.d-hex { width: 260px; box-sizing: border-box; padding-left: 3px; border-right: 1px solid #ccc; }
.d-ascii { padding-left: 3px; color: #b0b0b0; }
.d-ascii mark { background: #ddd; color: #aaa; padding-right: 5px; }
.dump-scroll {
  grid-row: 1 / span 2;
  grid-column: 2;
  background: #f2f2f2;
  display: flex;
  flex-direction: column;
  align-items: center;
  padding-top: 3px;
}
.sb-thumb { width: 100%; height: 12px; background: #c4c4c4; flex: none; margin-top: 1px; }
.sb-end { margin-top: auto; }
.stack {
  flex: 1;
  display: flex;
  box-shadow: inset 2px 1px 0 #222, inset 0 -1px #222;
  overflow: hidden;
}
.stack-rows { flex: 1; padding: 1.5px 0 0 2px; }
.srow {
  height: 8.13px;
  display: grid;
  grid-template-columns: 48px 55px 27px 1fr;
  overflow: hidden;
}
.srow span { padding-left: 3px; border-left: 1px solid #d0d0d0; box-sizing: border-box; }
.srow span:first-child { border-left: 0; padding-left: 1px; }
.srow span:nth-child(2) { padding-left: 8px; color: #8a8a8a; }
.dk-val span:nth-child(2) { color: #222; }
.sel span:first-child { background: #111; color: #fff; }
.sel span:nth-child(2) { color: #333; }
.srow .ret { color: #f02020; }
.srow .dark-c { color: #222; }
.srow span:nth-child(3) { color: #444; }
.hl { background: #c4c4c4; }
.hl span:first-child { color: #222; }
.stack-scroll {
  width: 9px;
  background: #f2f2f2;
  display: flex;
  flex-direction: column;
  padding: 3px 0 2px;
}
.sb-spacer { flex: 1; }
.shot-status {
  height: 15px;
  flex: none;
  background: #e6e6e6;
  border-top: 1px solid #999;
  box-sizing: border-box;
  display: flex;
  justify-content: flex-end;
}
.paused {
  width: 40px;
  background: #f6e800;
  color: #e02a2a;
  font: 8px/13px "Liberation Sans", sans-serif;
  padding-left: 2px;
  box-sizing: border-box;
}

/* taskbars, the same bar twice at two sizes */
.tbar {
  --u: 1;
  --app: 57px;
  --ico: 19px;
  height: 31px;
  flex: none;
  background: #202023;
  display: flex;
  align-items: stretch;
  font-size: 13px;
  color: #ddd;
  padding-right: 17px;
  position: relative;
  z-index: 1;
}
.tbar.mini {
  --u: .647;
  --app: 36.7px;
  --ico: 12px;
  height: 17px;
  font-size: 8.5px;
  font-family: "Open Sans", sans-serif;
  font-weight: 400;
  line-height: 17px;
  padding-right: 8px;
  background: #18181a;
}
.tbar span {
  display: flex;
  align-items: center;
  justify-content: center;
  flex: none;
  box-sizing: border-box;
}
.tbar svg { width: var(--ico); height: var(--ico); }
.t-start { width: 40px; color: #f2f2f2; }
.t-dim { color: #5d5d5f; }
.mini .t-start { width: 20px; }
.t-view { width: 39px; }
.mini .t-view { width: 28px; }
.t-app { width: var(--app); }
.t-on { background: linear-gradient(#4a90d0, #4a90d0) no-repeat center bottom / calc(100% - 10px) 2px; }
.t-hot { background: #b5651d; }
.t-soft { background-color: #39393c; }
.tbar .t-fill { flex: 1; }
.t-me { width: calc(46px * var(--u)); color: #cfcfcf; }
.t-me sup { font-size: 1.1em; line-height: 1; margin: -.8em 0 0 .3em; }
.t-up { width: calc(32px * var(--u)); }
.t-tray { width: calc(33.5px * var(--u)); }
.t-wide { width: calc(35px * var(--u)); }
.t-lang { width: calc(38px * var(--u)); }
.t-time { width: calc(70px * var(--u)); white-space: nowrap; }
.t-notif { width: calc(38px * var(--u)); }

.name-tag {
  position: absolute;
  left: 25px;
  top: 820px;
  height: 22px;
  display: flex;
  align-items: center;
  color: #fff;
  font-size: 12px;
  letter-spacing: -.9px;
  z-index: 5;
  white-space: nowrap;
}
.name-a { width: 97px; }
.name-b { background: #2a2a2c; padding: 2px 5px 2px 0; line-height: 18px; font-size: 13px; letter-spacing: -.6px; }
```
